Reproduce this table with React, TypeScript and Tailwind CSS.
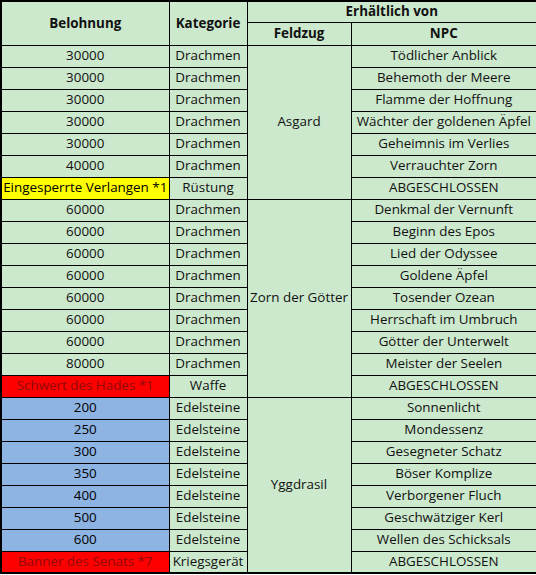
import React from "react";

type Row = {
  reward: string;
  category: string;
  npc: string;
  tone?: "yellow" | "red" | "blue";
};

type Campaign = { name: string; rows: Row[] };

const CAMPAIGNS: Campaign[] = [
  {
    name: "Asgard",
    rows: [
      { reward: "30000", category: "Drachmen", npc: "Tödlicher Anblick" },
      { reward: "30000", category: "Drachmen", npc: "Behemoth der Meere" },
      { reward: "30000", category: "Drachmen", npc: "Flamme der Hoffnung" },
      { reward: "30000", category: "Drachmen", npc: "Wächter der goldenen Äpfel" },
      { reward: "30000", category: "Drachmen", npc: "Geheimnis im Verlies" },
      { reward: "40000", category: "Drachmen", npc: "Verrauchter Zorn" },
      { reward: "Eingesperrte Verlangen *1", category: "Rüstung", npc: "ABGESCHLOSSEN", tone: "yellow" },
    ],
  },
  {
    name: "Zorn der Götter",
    rows: [
      { reward: "60000", category: "Drachmen", npc: "Denkmal der Vernunft" },
      { reward: "60000", category: "Drachmen", npc: "Beginn des Epos" },
      { reward: "60000", category: "Drachmen", npc: "Lied der Odyssee" },
      { reward: "60000", category: "Drachmen", npc: "Goldene Äpfel" },
      { reward: "60000", category: "Drachmen", npc: "Tosender Ozean" },
      { reward: "60000", category: "Drachmen", npc: "Herrschaft im Umbruch" },
      { reward: "60000", category: "Drachmen", npc: "Götter der Unterwelt" },
      { reward: "80000", category: "Drachmen", npc: "Meister der Seelen" },
      { reward: "Schwert des Hades *1", category: "Waffe", npc: "ABGESCHLOSSEN", tone: "red" },
    ],
  },
  {
    name: "Yggdrasil",
    rows: [
      { reward: "200", category: "Edelsteine", npc: "Sonnenlicht", tone: "blue" },
      { reward: "250", category: "Edelsteine", npc: "Mondessenz", tone: "blue" },
      { reward: "300", category: "Edelsteine", npc: "Gesegneter Schatz", tone: "blue" },
      { reward: "350", category: "Edelsteine", npc: "Böser Komplize", tone: "blue" },
      { reward: "400", category: "Edelsteine", npc: "Verborgener Fluch", tone: "blue" },
      { reward: "500", category: "Edelsteine", npc: "Geschwätziger Kerl", tone: "blue" },
      { reward: "600", category: "Edelsteine", npc: "Wellen des Schicksals", tone: "blue" },
      { reward: "Banner des Senats *7", category: "Kriegsgerät", npc: "ABGESCHLOSSEN", tone: "red" },
    ],
  },
];

const toneClass: Record<string, string> = {
  yellow: "bg-[#ffff00] text-black",
  red: "bg-[#ff0000] text-[#900a0a]",
  blue: "bg-[#8db4e2] text-black",
};

const cell = "border border-black px-0 text-center align-middle whitespace-nowrap";

export default function App() {
  return (
    <div className="w-[536px] h-[575px] bg-white font-['Open_Sans',sans-serif] text-[13.4px] leading-none text-[#111]">
      <table className="w-[536px] table-fixed border-collapse border-2 border-black bg-[#cce8cd]">
        <colgroup>
          <col className="w-[168px]" />
          <col className="w-[78px]" />
          <col className="w-[104px]" />
          <col className="w-[186px]" />
        </colgroup>
        <thead className="font-bold">
          <tr className="h-[21px]">
            <th rowSpan={2} className={cell}>Belohnung</th>
            <th rowSpan={2} className={cell}>Kategorie</th>
            <th colSpan={2} className={cell}>Erhältlich von</th>
          </tr>
          <tr className="h-[23px]">
            <th className={cell}>Feldzug</th>
            <th className={cell}>NPC</th>
          </tr>
        </thead>
        <tbody>
          {CAMPAIGNS.map((c) =>
            c.rows.map((r, i) => (
              <tr key={c.name + i} className="h-[22px]">
                <td className={`${cell} ${r.tone ? toneClass[r.tone] : ""}`}>{r.reward}</td>
                <td className={cell}>{r.category}</td>
                {i === 0 && (
                  <td rowSpan={c.rows.length} className={cell}>
                    {c.name}
                  </td>
                )}
                <td className={cell}>{r.npc}</td>
              </tr>
            ))
          )}
        </tbody>
      </table>
    </div>
  );
}
